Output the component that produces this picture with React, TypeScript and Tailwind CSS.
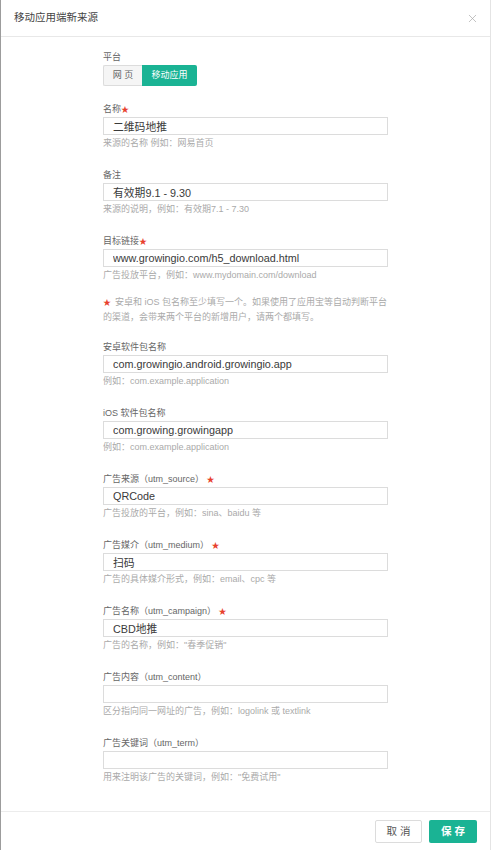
import { X } from 'lucide-react';

const fields = [
  { label: '名称', required: true, value: '二维码地推', help: '来源的名称 例如：网易首页' },
  { label: '备注', required: false, value: '有效期9.1 - 9.30', help: '来源的说明，例如：有效期7.1 - 7.30' },
  { label: '目标链接', required: true, value: 'www.growingio.com/h5_download.html', help: '广告投放平台，例如：www.mydomain.com/download' },
];

const packages = [
  { label: '安卓软件包名称', required: false, value: 'com.growingio.android.growingio.app', help: '例如：com.example.application' },
  { label: 'iOS 软件包名称', required: false, value: 'com.growing.growingapp', help: '例如：com.example.application' },
  { label: '广告来源（utm_source） ', required: true, value: 'QRCode', help: '广告投放的平台，例如：sina、baidu 等' },
  { label: '广告媒介（utm_medium） ', required: true, value: '扫码', help: '广告的具体媒介形式，例如：email、cpc 等' },
  { label: '广告名称（utm_campaign） ', required: true, value: 'CBD地推', help: '广告的名称，例如："春季促销"' },
  { label: '广告内容（utm_content）', required: false, value: '', help: '区分指向同一网址的广告，例如：logolink 或 textlink' },
  { label: '广告关键词（utm_term）', required: false, value: '', help: '用来注明该广告的关键词，例如："免费试用"' },
];

type Field = { label: string; required: boolean; value: string; help: string };

function FormField({ field, first }: { field: Field; first?: boolean }) {
  return (
    <div className={first ? 'mt-[16px]' : 'mt-[18px]'}>
      <div className="h-[14px] leading-[14px] text-[9px] text-[#666] whitespace-pre">
        {field.label}
        {field.required && <span className="text-[#e8412c] text-[8px]">★</span>}
      </div>
      <input
        readOnly
        defaultValue={field.value}
        className="mt-[1px] block w-full h-[18px] px-[9px] border border-[#dcdcdc] bg-white text-[10.8px] leading-[16px] text-[#3a3a3a] outline-none"
      />
      <div className="mt-[1px] h-[14px] leading-[14px] text-[9px] text-[#aaa] whitespace-nowrap">{field.help}</div>
    </div>
  );
}

export default function App() {
  return (
    <div
      className="w-[491px] h-[850px] flex flex-col bg-white border-l border-l-[#9c9c9c] border-r border-r-[#e4e4e4]"
      style={{ fontFamily: '"Liberation Sans", "Noto Sans CJK SC", sans-serif' }}
    >
      <div className="h-[37px] shrink-0 flex items-center justify-between pl-[13px] pr-[11px] border-b border-[#e8e8e8]">
        <span className="text-[10.5px] text-[#444]">移动应用端新来源</span>
        <X className="w-[13px] h-[13px] text-[#aaa]" strokeWidth={1.3} />
      </div>

      <div className="flex-1 pt-[13px] pl-[102px]">
        <div className="w-[285px]">
          <div className="h-[14px] leading-[14px] text-[9px] text-[#666]">平台</div>
          <div className="mt-[1px] flex h-[21px]">
            <button className="w-[39px] h-full flex items-center justify-center border border-[#dcdcdc] border-r-0 rounded-l-[2px] bg-[#f5f5f5] text-[9px] text-[#666] whitespace-pre">
              网 页
            </button>
            <button className="w-[55px] h-full flex items-center justify-center rounded-r-[2px] bg-[#1ab394] text-[9px] text-white">
              移动应用
            </button>
          </div>

          {fields.map((f, i) => (
            <FormField key={f.label} field={f} first={i === 0} />
          ))}

          <p className="mt-[13px] text-[9px] leading-[15px] text-[#aaa]">
            <span className="inline-block w-[12px] leading-[15px] text-[#e8412c] text-[8px]">★</span>安卓和 iOS 包名称至少填写一个。如果使用了应用宝等自动判断平台的渠道，会带来两个平台的新增用户，请两个都填写。
          </p>

          <div className="-mt-[3px]">
            {packages.map((f) => (
              <FormField key={f.label} field={f} />
            ))}
          </div>
        </div>
      </div>

      <div className="h-[39px] shrink-0 border-t border-[#ececec] flex items-start justify-end gap-[7px] pt-[8px] pr-[13px]">
        <button className="w-[47px] h-[23px] border border-[#dcdcdc] rounded-[2px] bg-white text-[10.5px] text-[#555] whitespace-pre">
          取 消
        </button>
        <button className="w-[48px] h-[23px] rounded-[2px] bg-[#1ab394] text-[10.5px] font-bold text-white whitespace-pre">
          保 存
        </button>
      </div>
    </div>
  );
}
